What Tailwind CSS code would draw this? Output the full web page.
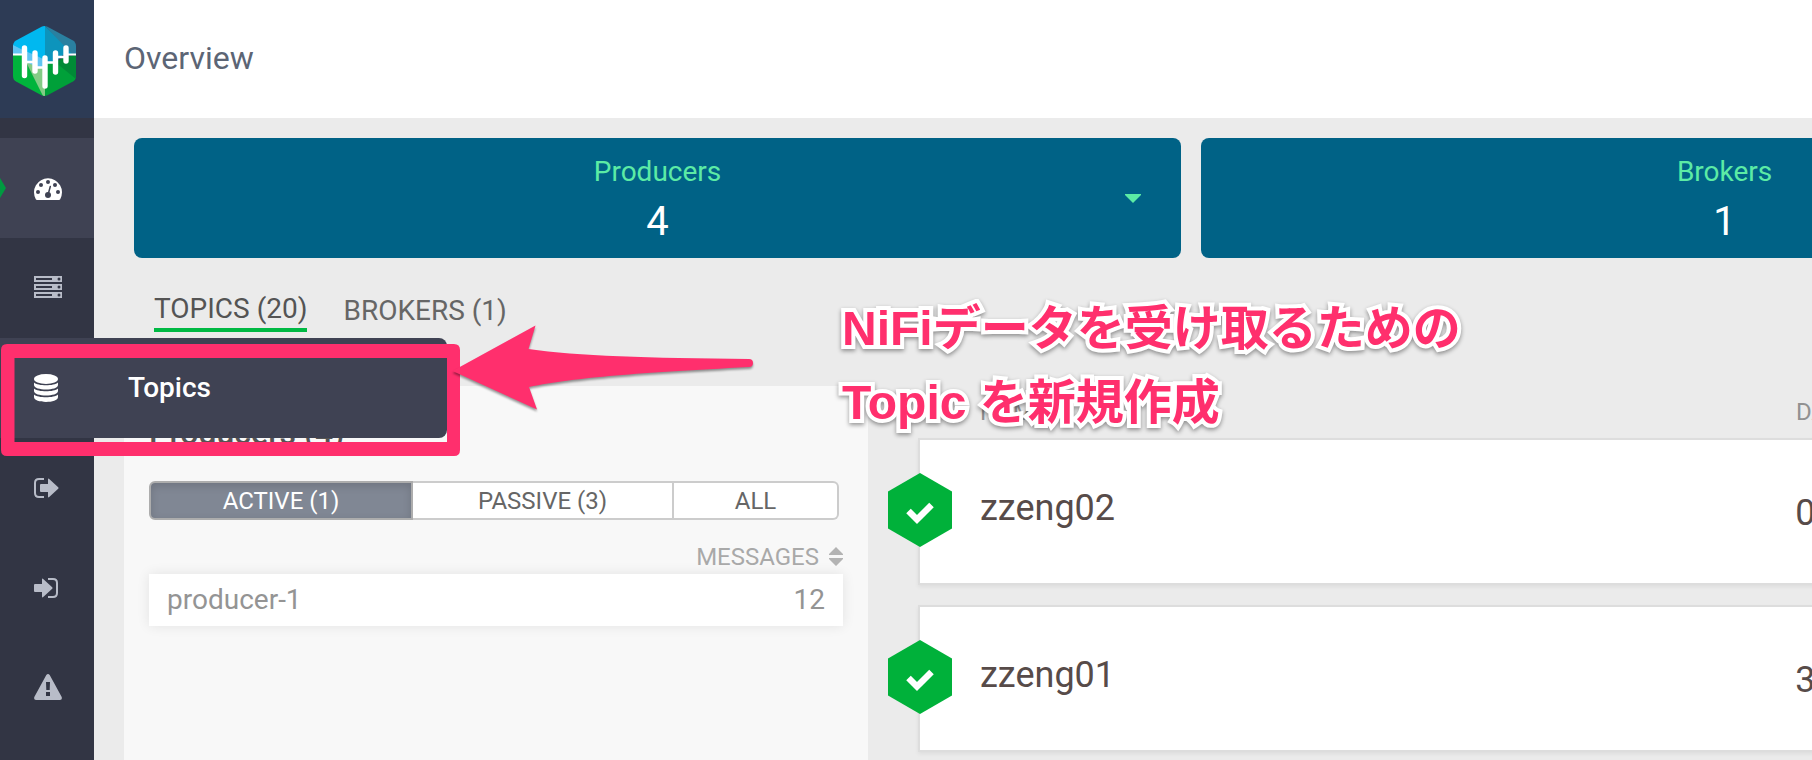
<!DOCTYPE html>
<html lang="ja">
<head>
<meta charset="utf-8">
<title>Overview</title>
<script src="https://cdn.jsdelivr.net/npm/@tailwindcss/browser@4"></script>
</head>
<body class="relative flex min-h-screen overflow-hidden bg-[#ebebeb] font-['Roboto',sans-serif] text-[#545454]">

<!-- Sidebar -->
<nav class="relative z-10 w-[94px] shrink-0 bg-[#323544] text-[#b8bcc8]" aria-label="Main">
  <a href="#" aria-label="Home" class="flex h-[118px] bg-[#2d3b55] pt-[26px] pl-[13px]">
    <svg width="63" height="70" viewBox="0 0 63 70">
      <defs><clipPath id="hex"><path d="M28.500 .8Q31.500 -.8 34.500 .8L60 14.500Q63 16.500 63 20V50Q63 53.500 60 55.500L34.500 69.200Q31.500 70.800 28.500 69.200L3 55.500Q0 53.500 0 50V20Q0 16.500 3 14.500Z"/></clipPath></defs>
      <g clip-path="url(#hex)">
        <path fill="#00b8f0" d="M0 0H32V46L0 29Z"/>
        <path fill="#0d94bc" d="M32 0L63 29H50L32 46Z"/>
        <path fill="#2a80a0" d="M32 0H63V29H60Z"/>
        <path fill="#61c5f2" d="M0 19L10 24L24 30L32 34V42L22 41L12 36L0 29Z"/>
        <path fill="#00b43c" d="M0 29H10L14 38L31 70H0Z"/>
        <path fill="#84cc86" d="M13 36L24 41H32V70H30Z"/>
        <path fill="#00a039" d="M32 38L42 36L52 32L63 29V70H32Z"/>
        <path fill="#008a36" d="M63 29V53L42 36L52 31Z"/>
        <path d="M0 28.500H11M53 28.500H63" stroke="#fff" stroke-width="2" fill="none"/>
        <path d="M11 36H22M22 41.500H32M32 36.500H42M42 31H53" stroke="#fff" stroke-width="2.500" fill="none"/>
        <path d="M11.500 22V49.500M22 27V45M32 32V60M42.500 27V46M53 22V35" stroke="#fff" stroke-width="5.400" stroke-linecap="round" fill="none"/>
      </g>
    </svg>
  </a>
  <ul class="pt-5">
    <li class="relative h-[100px] bg-[#3f4253]">
      <a href="#" aria-label="Overview" class="flex h-full pt-10 pl-[34px] text-white">
        <svg width="28" height="22" viewBox="0 0 28 22"><path fill="currentColor" d="M3 22Q2.200 22 1.800 21.200A14 14 0 1 1 26.200 21.200Q25.800 22 25 22Z"/><g fill="#3f4253"><circle cx="4" cy="14" r="2"/><circle cx="7" cy="7" r="2"/><circle cx="14" cy="4" r="2"/><circle cx="21" cy="7" r="2"/><circle cx="24" cy="14" r="2"/><circle cx="14" cy="17" r="3"/></g><path d="M14 17L16.300 8.500" stroke="#3f4253" stroke-width="1.500" stroke-linecap="round"/></svg>
      </a>
      <svg class="absolute top-10 left-0" width="6" height="20" viewBox="0 0 6 20"><path fill="#009a40" d="M0 0L6 10L0 20Z"/></svg>
    </li>
    <li class="h-[100px]">
      <a href="#" aria-label="Brokers" class="flex h-full pt-[38px] pl-[34px]">
        <svg width="28" height="22" viewBox="0 0 28 22"><path fill="currentColor" d="M0 0H28V6H0ZM0 8H28V14H0ZM0 16H28V22H0Z"/><path fill="#323544" d="M2 2H18V4H2ZM2 10H18V12H2ZM2 18H18V20H2Z"/><g fill="#323544"><circle cx="25" cy="3" r="1.500"/><circle cx="25" cy="11" r="1.500"/><circle cx="25" cy="19" r="1.500"/></g></svg>
      </a>
    </li>
    <li class="h-[100px]">
      <a href="#" class="flex h-full w-[447px] items-center gap-[70px] rounded-r-lg bg-[#3f4253] pl-[34px] text-[28px] leading-10 font-medium text-white">
        <svg width="24" height="28" viewBox="0 0 24 28"><g fill="currentColor"><ellipse cx="12" cy="5" rx="12" ry="5"/><path d="M0 8.500C4 12.200 20 12.200 24 8.500V11C24 17 0 17 0 11ZM0 14.500C4 18.200 20 18.200 24 14.500V17C24 23 0 23 0 17ZM0 20.500C4 24.200 20 24.200 24 20.500V23C24 29.600 0 29.600 0 23Z"/></g></svg>
        <span>Topics</span>
      </a>
    </li>
    <li class="h-[100px]">
      <a href="#" aria-label="Producers" class="flex h-full pt-10 pl-[34px]">
        <svg width="25" height="20" viewBox="0 0 25 20"><path d="M10 1H5Q1 1 1 5V15Q1 19 5 19H10" fill="none" stroke="currentColor" stroke-width="2"/><path fill="currentColor" d="M6 7Q6 6 7 6H14V1.500Q14 0 15.200 .9L24.200 9.200Q25 10 24.200 10.800L15.200 19.100Q14 20 14 18.500V14H7Q6 14 6 13Z"/></svg>
      </a>
    </li>
    <li class="h-[100px]">
      <a href="#" aria-label="Consumers" class="flex h-full pt-10 pl-[34px]">
        <svg width="24" height="20" viewBox="0 0 24 20"><path d="M14 1H19Q23 1 23 5V15Q23 19 19 19H14" fill="none" stroke="currentColor" stroke-width="2"/><path fill="currentColor" d="M0 7Q0 6 1 6H8V1.500Q8 0 9.200 .9L18.200 9.200Q19 10 18.200 10.800L9.200 19.100Q8 20 8 18.500V14H1Q0 14 0 13Z"/></svg>
      </a>
    </li>
    <li class="h-[100px]">
      <a href="#" aria-label="Alerts" class="flex h-full pt-9 pl-[34px]">
        <svg width="28" height="26" viewBox="0 0 28 26"><path fill="currentColor" fill-rule="evenodd" d="M12.300 1Q14 -1 15.700 1L27.700 23Q28.500 26 26 26H2Q-.5 26 .3 23ZM12 8L12.300 16H15.700L16 8ZM12 18V22H16V18Z"/></svg>
      </a>
    </li>
  </ul>
</nav>

<!-- Page content -->
<main class="flex min-w-0 flex-1 flex-col overflow-hidden">
  <header class="flex h-[118px] shrink-0 items-center bg-white pb-[2px] pl-[30px]">
    <h1 class="text-[32px] leading-10 text-[#5c6575]">Overview</h1>
  </header>

  <section class="flex gap-5 pt-5 pl-10 text-center" aria-label="Totals">
    <button type="button" class="relative h-[120px] w-[62.4%] shrink-0 rounded-lg bg-[#006286] pt-2">
      <span class="block text-[28px] leading-9 text-[#5ceba5]">Producers</span>
      <span class="block pt-1 text-[40px] leading-14 text-white">4</span>
      <svg class="absolute top-14 right-10" width="16" height="9" viewBox="0 0 16 9"><path fill="#5ceba5" d="M0 0H16V1L8 9L0 1Z"/></svg>
    </button>
    <button type="button" class="relative h-[120px] w-[62.4%] shrink-0 rounded-lg bg-[#006286] pt-2">
      <span class="block text-[28px] leading-9 text-[#5ceba5]">Brokers</span>
      <span class="block pt-1 text-[40px] leading-14 text-white">1</span>
    </button>
  </section>

  <div class="mt-[30px] flex h-11 items-center gap-9 pl-[60px] text-[28px] leading-[38px]">
    <button type="button" class="border-b-4 border-[#00b944] pt-[2px]">TOPICS (20)</button>
    <button type="button" class="pt-[2px] text-[#666]">BROKERS (1)</button>
  </div>

  <div class="mt-[54px] grid flex-1 grid-cols-[744fr_944fr] pl-[30px]">
    <section class="min-w-0 bg-[#f8f8f8] px-[25px] pt-[27px]">
      <h2 class="text-[32px] leading-10 font-medium">Producers (4)</h2>
      <div class="mt-7 mr-1 flex h-[39px] rounded-md text-2xl text-[#666]" role="group" aria-label="Filter">
        <button type="button" aria-pressed="true" class="w-[264px] rounded-l-md border-2 border-[#adadad] bg-[#808794] leading-none text-white inset-shadow-[0_3px_8px_rgb(0_0_0/0.14)]">ACTIVE (1)</button>
        <button type="button" class="w-[261px] border-y-2 border-r-2 border-[#ccc] bg-white leading-none">PASSIVE (3)</button>
        <button type="button" class="flex-1 rounded-r-md border-y-2 border-r-2 border-[#ccc] bg-white leading-none">ALL</button>
      </div>
      <table class="mt-[23px] block">
        <thead class="block">
          <tr class="flex justify-end text-2xl leading-7 text-[#a9a9a9]">
            <th class="flex gap-[10px] pb-[3px] font-normal">MESSAGES
              <svg class="mt-1" width="14" height="19" viewBox="0 0 14 19"><path fill="#b3b3b3" d="M7 0L14 7V8H0V7ZM0 11H14V12L7 19L0 12Z"/></svg>
            </th>
          </tr>
        </thead>
        <tbody class="block">
          <tr class="flex h-[52px] items-center justify-between bg-white px-[18px] text-[28px] leading-10 text-[#949494] shadow-[0_0_12px_rgb(0_0_0/0.09)]">
            <td>producer-1</td>
            <td>12</td>
          </tr>
        </tbody>
      </table>
    </section>

    <section class="min-w-0 pl-[50px]">
      <table class="block w-[140%]">
        <thead class="block">
          <tr class="grid h-[52px] grid-cols-[7fr_3fr] items-center text-left text-2xl leading-8 text-[#919191]">
            <th class="pl-[62px] font-normal">NAME</th>
            <th class="pl-[2px] font-normal">DATA IN</th>
          </tr>
        </thead>
        <tbody class="flex flex-col gap-5 text-4xl leading-10 text-[#574b49]">
          <tr class="relative grid h-[147px] grid-cols-[7fr_3fr] items-center border-2 border-[#ddd] bg-white shadow-[0_2px_4px_rgb(0_0_0/0.06)]">
            <td class="pb-2 pl-[60px]">
              <svg class="absolute top-[33px] -left-8" width="64" height="74" viewBox="0 0 64 74"><path fill="#00b13a" d="M32 0L64 18.500V55.500L32 74L0 55.500V18.500Z"/><path d="M20.500 38L29 46.500L43.500 32" fill="none" stroke="#fff" stroke-width="6.400" stroke-linejoin="miter"/></svg>
              zzeng02</td>
            <td class="pt-[2px] pl-[2px]">0B</td>
          </tr>
          <tr class="relative grid h-[147px] grid-cols-[7fr_3fr] items-center border-2 border-[#ddd] bg-white shadow-[0_2px_4px_rgb(0_0_0/0.06)]">
            <td class="pb-2 pl-[60px]">
              <svg class="absolute top-[33px] -left-8" width="64" height="74" viewBox="0 0 64 74"><path fill="#00b13a" d="M32 0L64 18.500V55.500L32 74L0 55.500V18.500Z"/><path d="M20.500 38L29 46.500L43.500 32" fill="none" stroke="#fff" stroke-width="6.400" stroke-linejoin="miter"/></svg>
              zzeng01</td>
            <td class="pt-[2px] pl-[2px]">3KB</td>
          </tr>
        </tbody>
      </table>
    </section>
  </div>
</main>

<!-- Callout: frame, arrow and note over the page -->
<div class="pointer-events-none absolute top-[344px] left-0 z-20 h-[112px] w-[461px]">
  <svg width="461" height="112" viewBox="0 0 461 112"><path fill="#ff2f6d" fill-rule="evenodd" d="M7 0H454Q460 0 460 6V106Q460 112 454 112H7Q1 112 1 106V6Q1 0 7 0ZM14.500 14V98H447V14Z"/></svg>
</div>
<svg class="pointer-events-none absolute top-[320px] left-[448px] z-20 drop-shadow-[0_2px_1px_rgb(0_0_0/0.4)]" width="312" height="96" viewBox="0 0 312 96"><path fill="#ff2f6d" d="M4.500 51L87.500 5.500L80.500 29C130 36 200 38 301 39A4 4 0 0 1 301 47C190 53 130 57 81 67L89 89.500Z"/></svg>
<p class="pointer-events-none absolute top-[292px] left-[842px] z-20 text-5xl leading-[74px] font-bold whitespace-nowrap font-['Liberation_Sans','Noto_Sans_CJK_JP',sans-serif] text-[#ff2f6d] drop-shadow-[0_2px_2px_rgb(0_0_0/0.4)] [-webkit-text-stroke:8px_white] [paint-order:stroke_fill] [stroke-linejoin:round]">NiFiデータを受け取るための<br>Topic を新規作成</p>

</body>
</html>
